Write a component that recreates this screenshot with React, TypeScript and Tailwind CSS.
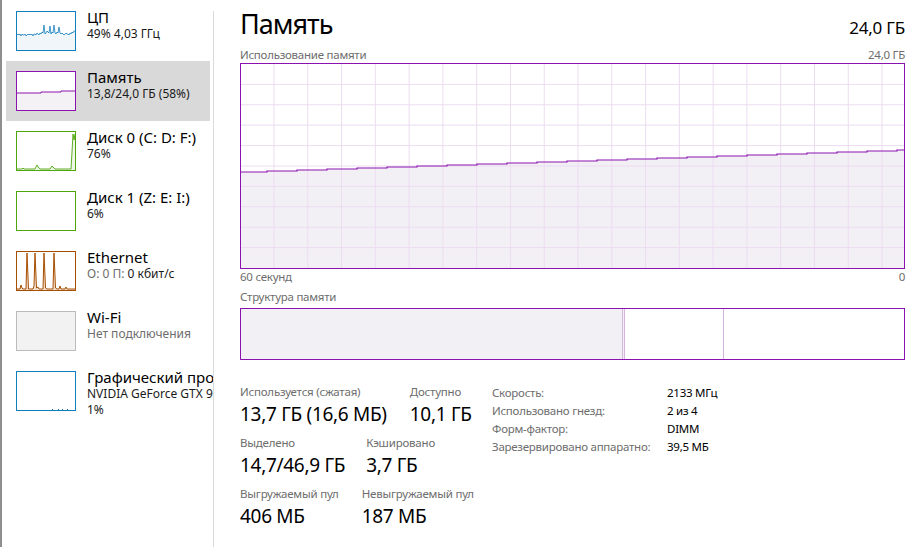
import React from 'react';

// Цвета графиков диспетчера задач
const PURPLE = '#8b12ae';
const GRID = '#ecdcf1';

type Kind = 'cpu' | 'mem' | 'disk0' | 'disk1' | 'eth' | 'wifi' | 'gpu';

interface SideItem {
  kind: Kind;
  title: string;
  lines: React.ReactNode[];
}

const items: SideItem[] = [
  { kind: 'cpu', title: 'ЦП', lines: ['49% 4,03 ГГц'] },
  { kind: 'mem', title: 'Память', lines: ['13,8/24,0 ГБ (58%)'] },
  { kind: 'disk0', title: 'Диск 0 (C: D: F:)', lines: ['76%'] },
  { kind: 'disk1', title: 'Диск 1 (Z: E: I:)', lines: ['6%'] },
  {
    kind: 'eth',
    title: 'Ethernet',
    lines: [
      <>
        <span className="text-[#6d6d6d]">О: 0 П: </span>0 кбит/с
      </>,
    ],
  },
  { kind: 'wifi', title: 'Wi-Fi', lines: [<span className="text-[#6d6d6d]">Нет подключения</span>] },
  { kind: 'gpu', title: 'Графический процессор 0', lines: ['NVIDIA GeForce GTX 960', '1%'] },
];

// шум для мини-графика ЦП
const cpuY = [
  23, 22, 23, 22, 24, 22, 23, 23, 22, 24, 23, 22, 23, 22, 23, 22, 24, 22, 22, 23, 21, 22, 23, 21,
  22, 20, 21, 13, 22, 21, 19, 20, 21, 14, 22, 20, 21, 13, 21, 22, 20, 21, 15, 21, 22, 21, 22, 23,
  22, 21, 22, 22, 23, 21, 22, 20, 21, 19, 19,
];

function pathFrom(ys: number[]) {
  return ys.map((y, i) => `${i === 0 ? 'M' : 'L'}${i} ${y}`).join(' ');
}

function Thumb({ kind }: { kind: Kind }) {
  const border =
    kind === 'cpu' || kind === 'gpu'
      ? '#117dbb'
      : kind === 'mem'
        ? PURPLE
        : kind === 'disk0' || kind === 'disk1'
          ? '#4da60c'
          : kind === 'eth'
            ? '#a74f01'
            : '#bcbcbc';

  let content: React.ReactNode = null;
  if (kind === 'cpu') {
    const d = pathFrom(cpuY);
    content = (
      <>
        <path d={`${d} L58 39 L0 39 Z`} fill="#f1f6fa" />
        <path d={d} fill="none" stroke="#117dbb" strokeWidth={0.8} />
      </>
    );
  } else if (kind === 'mem') {
    content = (
      <>
        <path d="M0 21 L24 21 L24 20 L44 20 L44 19 L58 19 L58 39 L0 39 Z" fill="#f4f2f5" />
        <path d="M0 21 L24 21 L24 20 L44 20 L44 19 L58 19" fill="none" stroke={PURPLE} strokeWidth={1} />
      </>
    );
  } else if (kind === 'disk0') {
    const d =
      'M0 37 L5 37 L6 36 L7 37 L18 37 L20 33 L22 36 L23 37 L33 37 L35 34 L37 36 L38 37 L54 37 L55 20 L56 2 L57 8 L58 2';
    content = (
      <>
        <path d={`${d} L58 39 L0 39 Z`} fill="#eef6e8" />
        <path d={d} fill="none" stroke="#4da60c" strokeWidth={0.9} />
      </>
    );
  } else if (kind === 'eth') {
    const d =
      'M0 37 L3 37 L4 33 L5 36 L6 37 L9 37 L10 1 L11.5 37 L16 37 L17 34 L18 1 L19.5 36 L21 35 L22 37 L26 37 L27 1 L28.5 36 L30 37 L36 37 L37 1 L38.5 36 L40 37 L42 37 L43 34 L44 37 L48 37 L49 35 L50 37 L58 37';
    content = (
      <>
        <path d={`${d} L58 39 L0 39 Z`} fill="#f2e2d3" />
        <path d={d} fill="none" stroke="#a74f01" strokeWidth={1} />
      </>
    );
  } else if (kind === 'wifi') {
    content = <rect x={0} y={0} width={58} height={38} fill="#f2f2f2" />;
  } else if (kind === 'gpu') {
    content = (
      <g fill="#117dbb">
        <rect x={35} y={37} width={1} height={1} />
        <rect x={41} y={37} width={1} height={1} />
        <rect x={45} y={37} width={1} height={1} />
        <rect x={50} y={37} width={1} height={1} />
      </g>
    );
  }

  return (
    <div className="w-[60px] h-[40px] border shrink-0 bg-white" style={{ borderColor: border }}>
      <svg width={58} height={38} viewBox="0 0 58 38" className="block">
        {content}
      </svg>
    </div>
  );
}

// основной график использования памяти
function UsageGraph() {
  const w = 663;
  const h = 204;
  const hLines = Array.from({ length: 9 }, (_, i) => (h / 10) * (i + 1));
  const vLines = Array.from({ length: 19 }, (_, i) => 33 + 33.78 * i);
  const pts: string[] = ['M0 108', 'L26 108'];
  let y = 108;
  for (let x = 26; x < w; x += 30) {
    y -= 1;
    pts.push(`L${x} ${y}`, `L${x + 30} ${y}`);
  }
  pts.push(`L${w} 86`);
  const line = pts.join(' ');
  return (
    <div className="h-[206px] border border-[#8b12ae] bg-white">
      <svg width={w} height={h} viewBox={`0 0 ${w} ${h}`} className="block">
        <path d={`${line} L${w} ${h} L0 ${h} Z`} fill="#f3f0f5" />
        {hLines.map((v) => (
          <line key={`h${v}`} x1={0} x2={w} y1={v} y2={v} stroke={GRID} strokeWidth={1} />
        ))}
        {vLines.map((v) => (
          <line key={`v${v}`} x1={v} x2={v} y1={0} y2={h} stroke={GRID} strokeWidth={1} />
        ))}
        <path d={line} fill="none" stroke={PURPLE} strokeWidth={1.2} />
      </svg>
    </div>
  );
}

function Stat({ label, value }: { label: string; value: string }) {
  return (
    <div className="flex flex-col">
      <span className="text-[11.5px] leading-[16px] tracking-[-0.2px] text-[#6d6d6d] whitespace-nowrap">
        {label}
      </span>
      <span className="mt-[1px] text-[19px] leading-[26px] tracking-[-0.3px] text-black whitespace-nowrap">
        {value}
      </span>
    </div>
  );
}

const props = [
  ['Скорость:', '2133 МГц'],
  ['Использовано гнезд:', '2 из 4'],
  ['Форм-фактор:', 'DIMM'],
  ['Зарезервировано аппаратно:', '39,5 МБ'],
];

export default function App() {
  return (
    <div className="flex w-[921px] h-[547px] bg-white overflow-hidden font-['Segoe_UI','Noto_Sans',sans-serif] text-[#1a1a1a]">
      {/* край соседнего окна */}
      <div className="w-[2px] shrink-0 bg-[#8e8e8e]" />

      {/* боковая панель */}
      <div className="w-[211px] shrink-0 overflow-hidden pt-[1px] px-[4px]">
        {items.map((it) => (
          <div
            key={it.kind}
            className={`flex gap-[11px] h-[60px] w-[204px] pl-[10px] ${it.kind === 'mem' ? 'bg-[#d9d9d9]' : ''}`}
          >
            <div className="mt-[10px]">
              <Thumb kind={it.kind} />
            </div>
            <div className="mt-[7px] flex flex-col whitespace-nowrap">
              <span className="text-[15px] leading-[18px] text-black">{it.title}</span>
              {it.lines.map((l, i) => (
                <span key={i} className="text-[12px] leading-[15.5px] text-[#1a1a1a]">
                  {l}
                </span>
              ))}
            </div>
          </div>
        ))}
      </div>

      {/* разделитель */}
      <div className="w-[1px] shrink-0 mt-[11px] bg-[#dadada]" />

      {/* основная область */}
      <div className="flex-1 flex flex-col pl-[26px] pr-[16px] pt-[7px]">
        <div className="flex items-baseline justify-between">
          <span className="text-[27px] leading-[34px] tracking-[-1px] text-black">Память</span>
          <span className="text-[17px] leading-[22px] tracking-[-0.2px] text-black">24,0 ГБ</span>
        </div>

        <div className="mt-[6px] flex justify-between text-[11.5px] leading-[16px] tracking-[-0.25px] text-[#6d6d6d]">
          <span>Использование памяти</span>
          <span>24,0 ГБ</span>
        </div>
        <UsageGraph />
        <div className="flex justify-between text-[11.5px] leading-[16px] tracking-[-0.25px] text-[#6d6d6d]">
          <span>60 секунд</span>
          <span>0</span>
        </div>

        <div className="mt-[4px] text-[11.5px] leading-[16px] tracking-[-0.25px] text-[#6d6d6d]">
          Структура памяти
        </div>
        <div className="mt-[3px] h-[52px] border border-[#8b12ae] flex bg-white">
          <div className="w-[381px] bg-[#f3f0f5]" />
          <div className="w-[1px] bg-[#d6b5df]" />
          <div className="w-[1px] bg-[#f3f0f5]" />
          <div className="w-[1px] bg-[#d6b5df]" />
          <div className="w-[98px]" />
          <div className="w-[1px] bg-[#d6b5df]" />
          <div className="flex-1" />
        </div>

        <div className="mt-[24px] flex">
          <div className="w-[252px] shrink-0 flex flex-col gap-[8px]">
            <div className="flex gap-[23px]">
              <Stat label="Используется (сжатая)" value="13,7 ГБ (16,6 МБ)" />
              <Stat label="Доступно" value="10,1 ГБ" />
            </div>
            <div className="flex gap-[21px]">
              <Stat label="Выделено" value="14,7/46,9 ГБ" />
              <Stat label="Кэшировано" value="3,7 ГБ" />
            </div>
            <div className="flex gap-[23px]">
              <Stat label="Выгружаемый пул" value="406 МБ" />
              <Stat label="Невыгружаемый пул" value="187 МБ" />
            </div>
          </div>

          <div className="flex flex-col text-[11.5px] leading-[18px] tracking-[-0.25px]">
            {props.map(([k, v]) => (
              <div key={k} className="flex">
                <span className="w-[175px] shrink-0 text-[#6d6d6d] whitespace-nowrap">{k}</span>
                <span className="text-black whitespace-nowrap">{v}</span>
              </div>
            ))}
          </div>
        </div>
      </div>
    </div>
  );
}
